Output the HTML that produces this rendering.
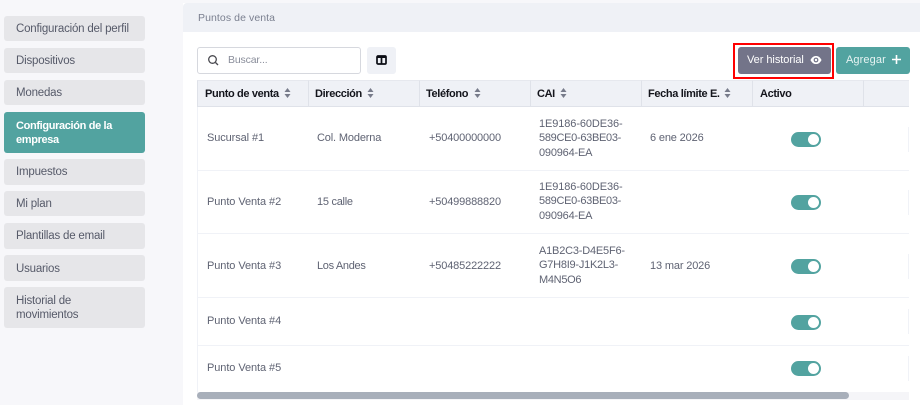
<!DOCTYPE html>
<html><head><meta charset="utf-8"><style>
html,body{margin:0;padding:0}
body{width:920px;height:405px;overflow:hidden;background:#f7f7fa;position:relative;font-family:"Liberation Sans",sans-serif}
div,span,svg{position:absolute;box-sizing:border-box}
.t{white-space:nowrap;font-size:11px;line-height:14px;color:#5f6373;letter-spacing:-.08px}
.s{background:#e6e6e9;border-radius:3px;left:4px;width:141px}
.st{left:16px;color:#565a69;font-size:11.5px;line-height:14px;white-space:nowrap;letter-spacing:-.2px}
.h{top:80px;height:27px;background:#eff1f6;border-right:1px solid #dfe2e9;border-bottom:1px solid #dfe2e9;border-top:1px solid #e6e8ee}
.ht{top:87px;color:#14151c;font-weight:bold;font-size:11px;line-height:14px;white-space:nowrap;letter-spacing:-.36px}
.l{left:198px;width:711px;height:1px;background:#f0f2f7}
.tg{left:791px;width:30px;height:15px;border-radius:8px;background:#52a3a0}
.tg i{position:absolute;right:2px;top:2px;width:11px;height:11px;border-radius:50%;background:#fff}
</style></head><body>
<div style="left:183px;top:3px;width:737px;height:402px;background:#fff"></div>
<div style="left:183px;top:3px;width:737px;height:29px;background:#eff1f6;border-top-left-radius:4px"></div>
<div class="t" style="left:198px;top:11px;font-size:10.5px;color:#7b8090;letter-spacing:.08px">Puntos de venta</div>

<div class="s" style="top:16px;height:25px"></div><div class="st" style="top:22px">Configuración del perfil</div>
<div class="s" style="top:48px;height:25px"></div><div class="st" style="top:54px">Dispositivos</div>
<div class="s" style="top:80px;height:25px"></div><div class="st" style="top:86px">Monedas</div>
<div class="s" style="top:112px;height:41px;background:#52a3a0"></div><div class="st" style="top:119px;color:#fff;font-weight:bold;font-size:11px;letter-spacing:-.35px">Configuración de la</div><div class="st" style="top:133px;color:#fff;font-weight:bold;font-size:11px;letter-spacing:-.35px">empresa</div>
<div class="s" style="top:159px;height:26px"></div><div class="st" style="top:165px">Impuestos</div>
<div class="s" style="top:191px;height:25px"></div><div class="st" style="top:197px">Mi plan</div>
<div class="s" style="top:223px;height:26px"></div><div class="st" style="top:229px">Plantillas de email</div>
<div class="s" style="top:255px;height:26px"></div><div class="st" style="top:262px">Usuarios</div>
<div class="s" style="top:287px;height:41px"></div><div class="st" style="top:294px">Historial de</div><div class="st" style="top:308px">movimientos</div>

<div style="left:197px;top:47px;width:164px;height:27px;border:1px solid #d6d8de;border-radius:3px;background:#fff"></div>
<svg style="left:207px;top:54px" width="12" height="12" viewBox="0 0 12 12" fill="none" stroke="#4a4a50" stroke-width="1.3"><circle cx="5.5" cy="5.5" r="3.8"/><path d="M8.5 8.5L11 11"/></svg>
<div class="t" style="left:228px;top:53px;color:#8a8e9b;font-size:10.5px;letter-spacing:-.15px">Buscar...</div>
<div style="left:367px;top:47px;width:29px;height:27px;background:#eff1f6;border-radius:3px"></div>
<svg style="left:376px;top:55px" width="11" height="10" viewBox="0 0 11 10" fill="none" stroke="#0b0d14" stroke-width="1.7"><rect x="1" y="1" width="9" height="8" rx="1"/><path d="M5.5 1V9M1 2.2H10"/></svg>

<div style="left:733px;top:43px;width:101px;height:36px;border:2.5px solid #f00"></div>
<div style="left:738px;top:47px;width:93px;height:27px;background:#737489;border-radius:3px"></div>
<div class="t" style="left:747px;top:53px;color:#fff;font-size:11px;letter-spacing:-.05px">Ver historial</div>
<svg style="left:810px;top:54px" width="12" height="12" viewBox="0 0 13 12"><path d="M.5 6C2 3 4 1.6 6.500 1.600S11 3 12.500 6C11 9 9 10.400 6.500 10.400S2 9 .5 6Z" fill="#fff"/><circle cx="6.500" cy="6" r="2.600" fill="#737489"/><circle cx="6.500" cy="6" r="1.300" fill="#fff"/></svg>
<div style="left:836px;top:47px;width:74px;height:27px;background:#52a3a0;border-radius:3px"></div>
<div class="t" style="left:846px;top:53px;color:#e6f3f2;font-size:11px;letter-spacing:.1px">Agregar</div>
<svg style="left:891px;top:54px" width="11" height="11" viewBox="0 0 11 11" stroke="#fff" stroke-width="1.600"><path d="M5.500 1V10M1 5.500H10"/></svg>

<div class="h" style="left:197px;width:112px;border-left:1px solid #dfe2e9"></div>
<div class="h" style="left:309px;width:111px"></div>
<div class="h" style="left:420px;width:111px"></div>
<div class="h" style="left:531px;width:111px"></div>
<div class="h" style="left:642px;width:111px"></div>
<div class="h" style="left:753px;width:111px"></div>
<div class="h" style="left:864px;width:45px;border-right:0"></div>
<div class="ht" style="left:205px">Punto de venta</div>
<div class="ht" style="left:315px">Dirección</div>
<div class="ht" style="left:426px">Teléfono</div>
<div class="ht" style="left:537px">CAI</div>
<div class="ht" style="left:648px">Fecha límite E.</div>
<div class="ht" style="left:760px">Activo</div>
<svg style="left:284px;top:88px" width="7" height="10" viewBox="0 0 7 10" fill="#777b8a"><path d="M3.500 0L6.500 4H.5ZM3.500 10L.5 6H6.500Z"/></svg>
<svg style="left:367px;top:88px" width="7" height="10" viewBox="0 0 7 10" fill="#777b8a"><path d="M3.500 0L6.500 4H.5ZM3.500 10L.5 6H6.500Z"/></svg>
<svg style="left:474px;top:88px" width="7" height="10" viewBox="0 0 7 10" fill="#777b8a"><path d="M3.500 0L6.500 4H.5ZM3.500 10L.5 6H6.500Z"/></svg>
<svg style="left:560px;top:88px" width="7" height="10" viewBox="0 0 7 10" fill="#777b8a"><path d="M3.500 0L6.500 4H.5ZM3.500 10L.5 6H6.500Z"/></svg>
<svg style="left:724px;top:88px" width="7" height="10" viewBox="0 0 7 10" fill="#777b8a"><path d="M3.500 0L6.500 4H.5ZM3.500 10L.5 6H6.500Z"/></svg>

<div style="left:197px;top:107px;width:1px;height:285px;background:#f0f2f7"></div>
<div class="l" style="top:170px"></div><div class="l" style="top:233px"></div><div class="l" style="top:297px"></div><div class="l" style="top:345px"></div>
<div style="left:908px;top:127px;width:1px;height:25px;background:#f0f2f7"></div>
<div style="left:908px;top:190px;width:1px;height:25px;background:#f0f2f7"></div>
<div style="left:908px;top:254px;width:1px;height:25px;background:#f0f2f7"></div>
<div style="left:908px;top:309px;width:1px;height:25px;background:#f0f2f7"></div>
<div style="left:908px;top:356px;width:1px;height:25px;background:#f0f2f7"></div>

<div class="t" style="left:207px;top:131px;letter-spacing:-.1px">Sucursal #1</div>
<div class="t" style="left:317px;top:131px;letter-spacing:-.15px">Col. Moderna</div>
<div class="t" style="left:429px;top:131px;letter-spacing:-.15px">+50400000000</div>
<div class="t" style="left:539px;top:117px;letter-spacing:-.1px">1E9186-60DE36-</div>
<div class="t" style="left:539px;top:131px;letter-spacing:-.3px">589CE0-63BE03-</div>
<div class="t" style="left:539px;top:146px;letter-spacing:-.2px">090964-EA</div>
<div class="t" style="left:650px;top:131px;letter-spacing:-.15px">6 ene 2026</div>
<div class="tg" style="top:132px"><i></i></div>

<div class="t" style="left:207px;top:195px">Punto Venta #2</div>
<div class="t" style="left:317px;top:195px;letter-spacing:-.27px">15 calle</div>
<div class="t" style="left:429px;top:195px;letter-spacing:-.15px">+50499888820</div>
<div class="t" style="left:539px;top:180px;letter-spacing:-.1px">1E9186-60DE36-</div>
<div class="t" style="left:539px;top:194px;letter-spacing:-.3px">589CE0-63BE03-</div>
<div class="t" style="left:539px;top:209px;letter-spacing:-.2px">090964-EA</div>
<div class="tg" style="top:195px"><i></i></div>

<div class="t" style="left:207px;top:259px">Punto Venta #3</div>
<div class="t" style="left:317px;top:259px;letter-spacing:-.32px">Los Andes</div>
<div class="t" style="left:429px;top:259px;letter-spacing:-.15px">+50485222222</div>
<div class="t" style="left:539px;top:244px;letter-spacing:-.2px">A1B2C3-D4E5F6-</div>
<div class="t" style="left:539px;top:258px;letter-spacing:-.25px">G7H8I9-J1K2L3-</div>
<div class="t" style="left:539px;top:273px;letter-spacing:-.3px">M4N5O6</div>
<div class="t" style="left:650px;top:259px;letter-spacing:-.15px">13 mar 2026</div>
<div class="tg" style="top:259px"><i></i></div>

<div class="t" style="left:207px;top:314px">Punto Venta #4</div>
<div class="tg" style="top:315px"><i></i></div>
<div class="t" style="left:207px;top:361px">Punto Venta #5</div>
<div class="tg" style="top:361px"><i></i></div>

<div style="left:197px;top:392px;width:712px;height:8px;background:#f5f5f8"></div>
<div style="left:197px;top:392px;width:652px;height:7px;background:#a8afba;border-radius:4px"></div>
</body></html>
